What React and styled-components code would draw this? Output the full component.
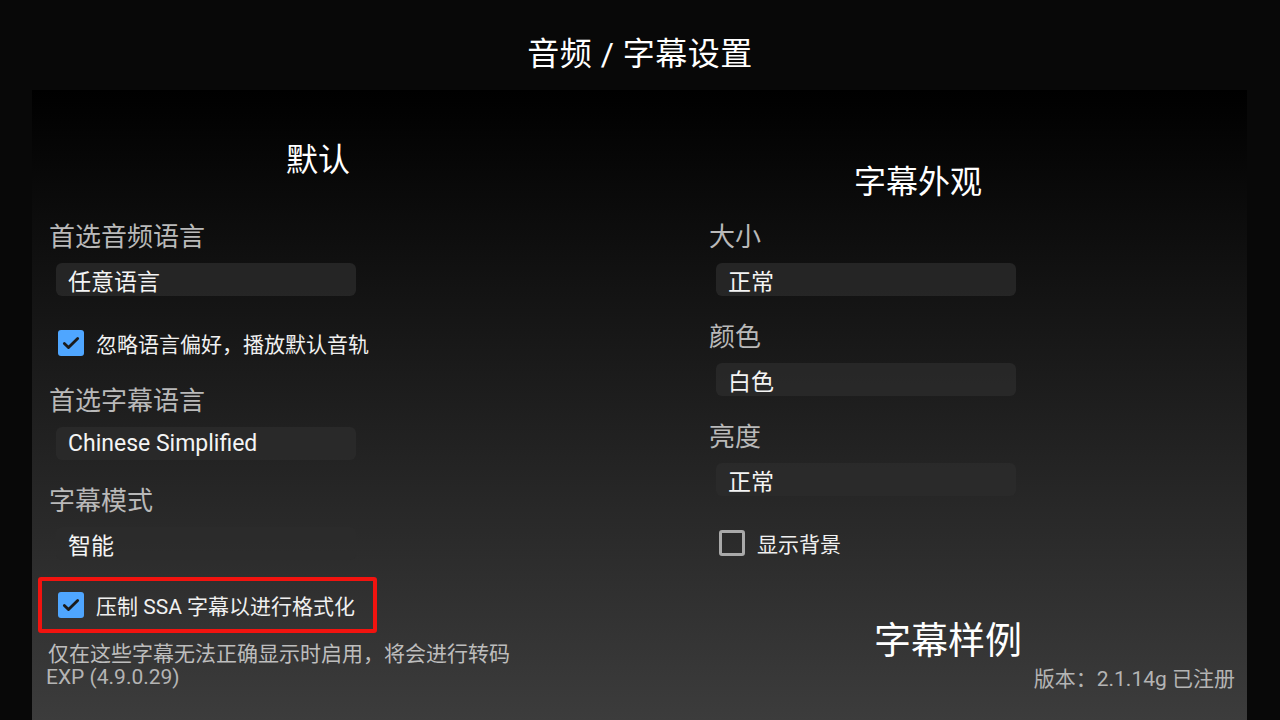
import React from "react";
import styled, { createGlobalStyle } from "styled-components";

const GlobalStyle = createGlobalStyle`
    html, body {
        margin: 0;
        padding: 0;
        background: #080808;
    }
    body {
        font-family: "Roboto", "Noto Sans CJK SC", sans-serif;
        color: #f2f2f2;
    }
`;

const Screen = styled.div`
    width: 1280px;
    height: 720px;
    display: flex;
    flex-direction: column;
    background: #080808;
    overflow: hidden;
`;

const Header = styled.header`
    height: 90px;
    display: flex;
    align-items: center;
    justify-content: center;
    padding-top: 12px;
    box-sizing: border-box;
    h1 {
        margin: 0;
        font-size: 32px;
        font-weight: 400;
        color: #fff;
        letter-spacing: 0.5px;
    }
`;

const Panel = styled.main`
    flex: 1;
    margin: 0 33px 0 32px;
    padding: 0 12px 0 16px;
    display: flex;
    flex-direction: column;
    background: linear-gradient(to bottom, #000 0%, #3c3c3c 100%);
`;

const Columns = styled.div`
    display: grid;
    grid-template-columns: 660px 1fr;
`;

const Column = styled.section`
    display: flex;
    flex-direction: column;
`;

const Heading = styled.h2`
    margin: 0;
    height: 127px;
    width: ${(p) => p.$width}px;
    padding-top: ${(p) => p.$top}px;
    box-sizing: border-box;
    text-align: center;
    font-size: 32px;
    line-height: 44px;
    font-weight: 400;
    color: #fff;
`;

const Label = styled.div`
    margin-top: ${(p) => p.$gap || 0}px;
    margin-left: 1px;
    font-size: 26px;
    line-height: 40px;
    color: #b9b9b9;
`;

const Select = styled.div`
    margin: 6px 0 0 8px;
    width: 300px;
    height: 33px;
    box-sizing: border-box;
    padding-left: 12px;
    display: flex;
    align-items: center;
    border-radius: 6px;
    background: rgba(44, 44, 44, 0.75);
    font-size: 23px;
    color: #f4f4f4;
`;

const CheckRow = styled.label`
    margin-top: ${(p) => p.$gap || 0}px;
    margin-left: ${(p) => p.$indent || 0}px;
    height: 40px;
    display: flex;
    align-items: center;
    gap: 12px;
    font-size: 21px;
    color: #f0f0f0;
`;

const Box = styled.span`
    width: 26px;
    height: 26px;
    box-sizing: border-box;
    border-radius: 3px;
    display: flex;
    align-items: center;
    justify-content: center;
    background: ${(p) => (p.$checked ? "#4fa6ff" : "transparent")};
    border: ${(p) => (p.$checked ? "none" : "3px solid #a9a9a9")};
`;

const Highlight = styled.div`
    margin: 17px 0 0 -10px;
    width: 339px;
    height: 56px;
    box-sizing: border-box;
    border: 4px solid #f2130f;
    border-radius: 3px;
    padding-left: 16px;
    display: flex;
    align-items: center;
`;

const Hint = styled.div`
    margin-top: 8px;
    font-size: 21px;
    line-height: 26px;
    color: #bdbdbd;
`;

const Sample = styled.div`
    margin-top: 57px;
    width: 480px;
    text-align: center;
    font-size: 37px;
    line-height: 44px;
    color: #fff;
`;

const Footer = styled.footer`
    display: flex;
    justify-content: space-between;
    align-items: center;
    height: 20px;
    margin-left: -2px;
    font-size: 21px;
    color: #b4b4b4;
`;

function Checkbox({ checked, children, gap, indent }) {
    return (
        <CheckRow $gap={gap} $indent={indent}>
            <Box $checked={checked}>
                {checked && (
                    <svg width="20" height="20" viewBox="0 0 24 24">
                        <path d="M4 12.5l5 5L20 6.5" fill="none" stroke="#1b1b1b" strokeWidth="3.4" strokeLinecap="round" strokeLinejoin="round" />
                    </svg>
                )}
            </Box>
            {children}
        </CheckRow>
    );
}

export default function App() {
    return (
        <Screen>
            <GlobalStyle />
            <Header>
                <h1>音频 / 字幕设置</h1>
            </Header>
            <Panel>
                <Columns>
                    <Column>
                        <Heading $width={540} $top={48}>默认</Heading>
                        <Label>首选音频语言</Label>
                        <Select>任意语言</Select>
                        <Checkbox checked gap={27} indent={10}>忽略语言偏好，播放默认音轨</Checkbox>
                        <Label $gap={18}>首选字幕语言</Label>
                        <Select>Chinese Simplified</Select>
                        <Label $gap={21}>字幕模式</Label>
                        <Select>智能</Select>
                        <Highlight>
                            <Checkbox checked>压制 SSA 字幕以进行格式化</Checkbox>
                        </Highlight>
                        <Hint>仅在这些字幕无法正确显示时启用，将会进行转码</Hint>
                    </Column>
                    <Column>
                        <Heading $width={420} $top={70}>字幕外观</Heading>
                        <Label>大小</Label>
                        <Select>正常</Select>
                        <Label $gap={21}>颜色</Label>
                        <Select>白色</Select>
                        <Label $gap={21}>亮度</Label>
                        <Select>正常</Select>
                        <Checkbox gap={27} indent={11}>显示背景</Checkbox>
                        <Sample>字幕样例</Sample>
                    </Column>
                </Columns>
                <Footer>
                    <span>EXP (4.9.0.29)</span>
                    <span>版本：2.1.14g 已注册</span>
                </Footer>
            </Panel>
        </Screen>
    );
}
